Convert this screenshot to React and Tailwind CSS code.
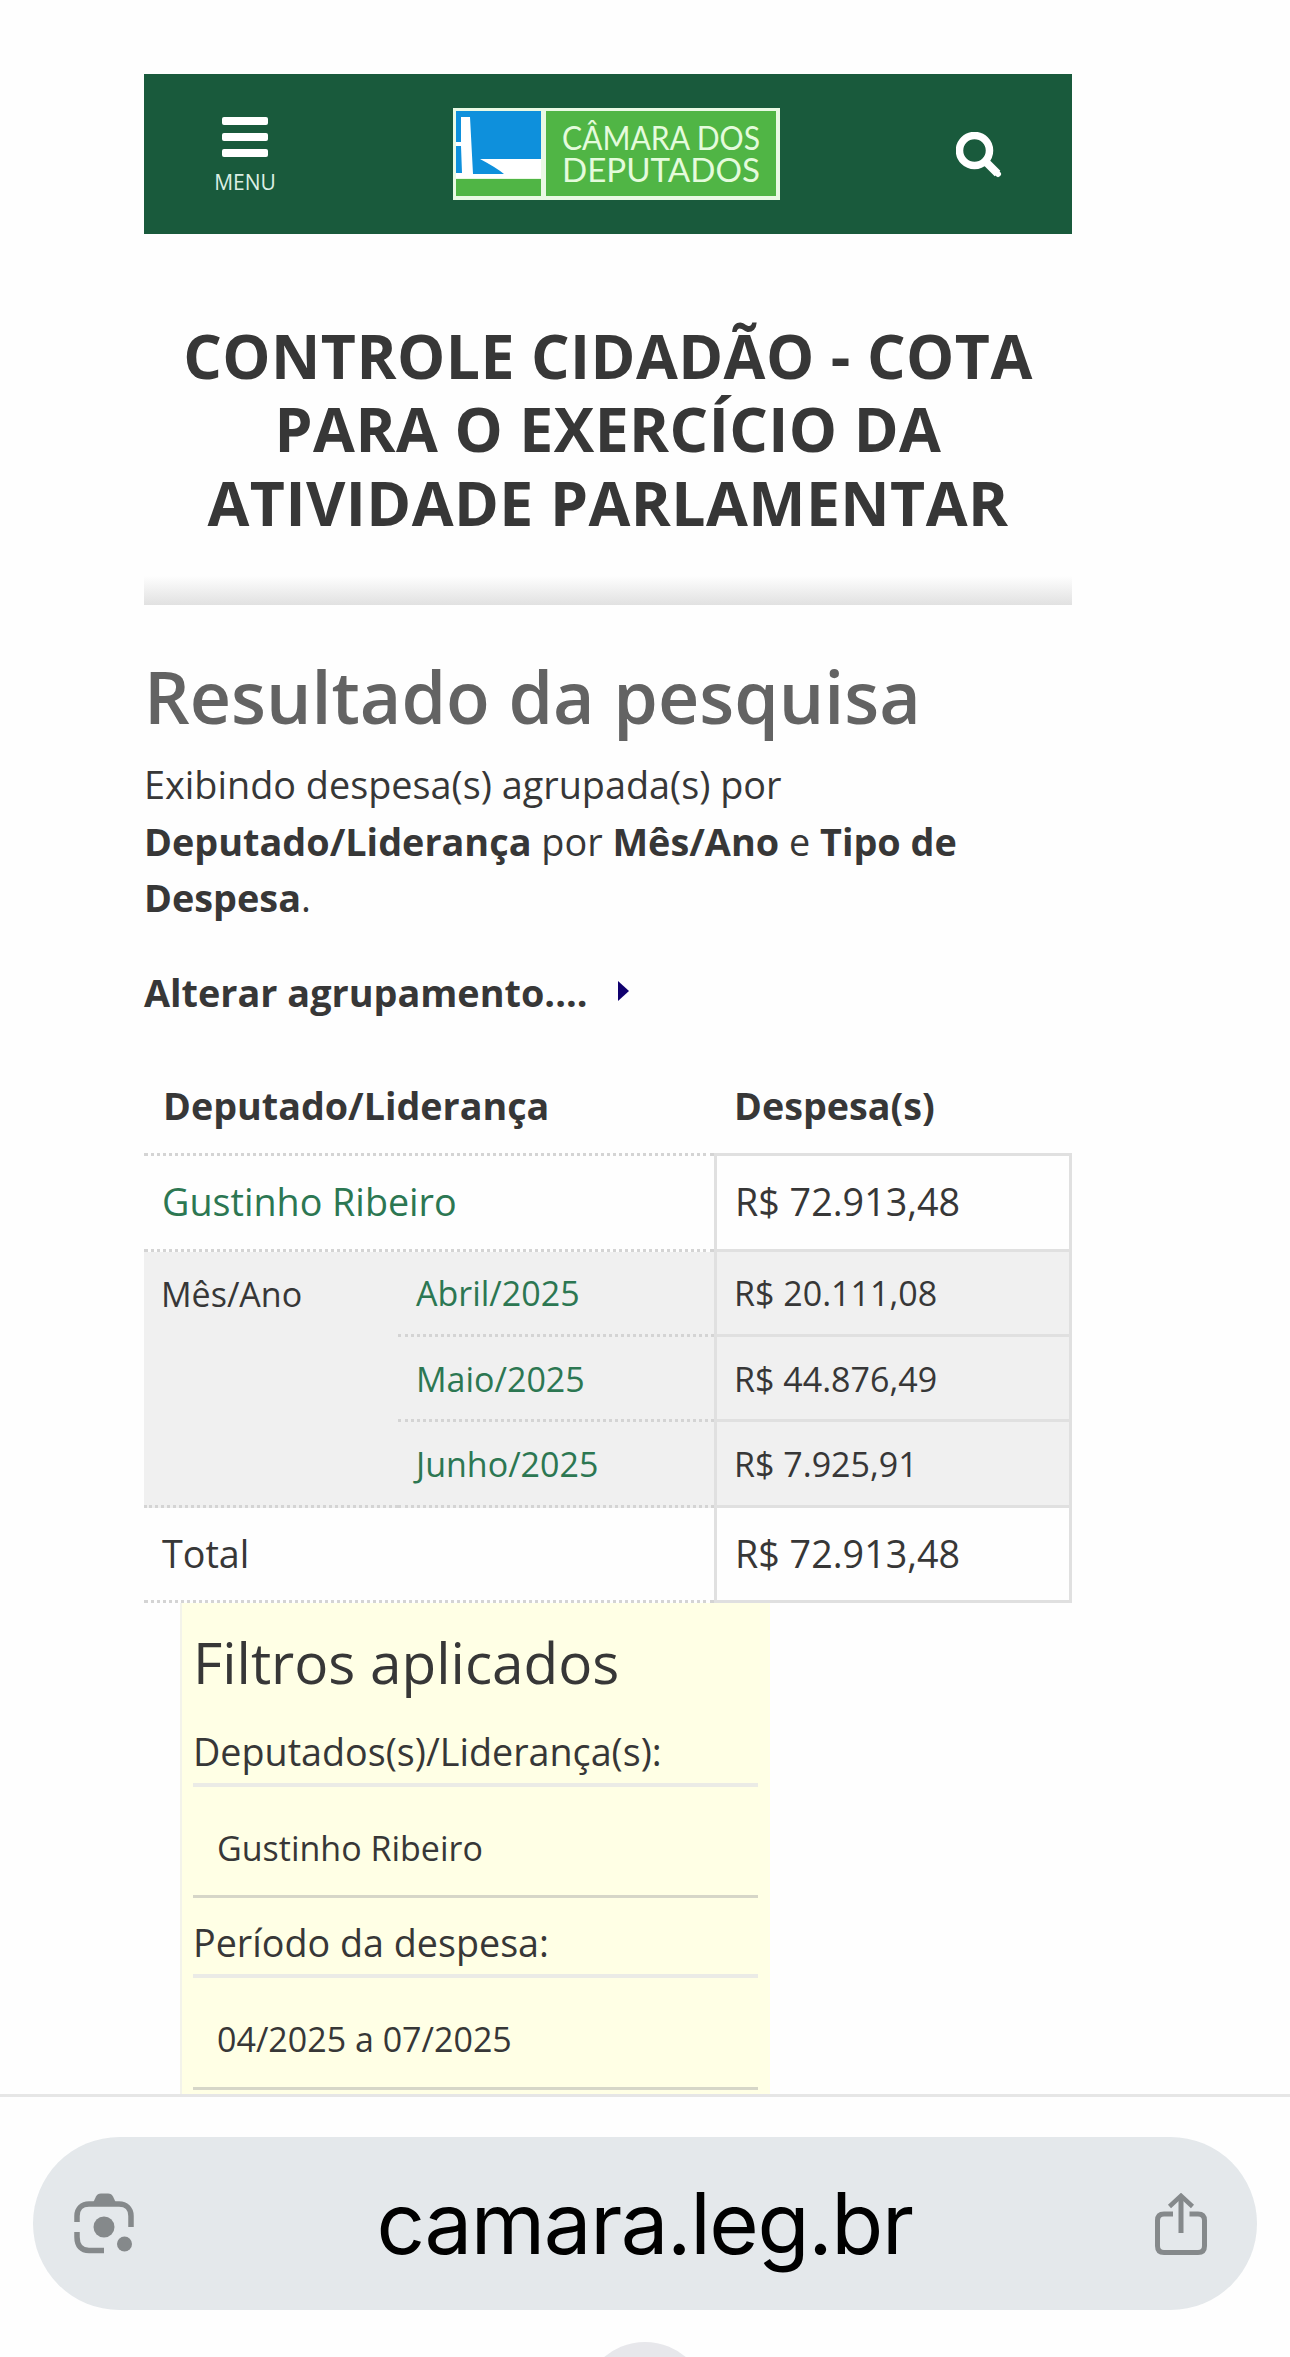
import React from 'react';

const meses = [
  { mes: 'Abril/2025', valor: 'R$ 20.111,08' },
  { mes: 'Maio/2025', valor: 'R$ 44.876,49' },
  { mes: 'Junho/2025', valor: 'R$ 7.925,91' }
];

const filtros = [
  { label: 'Deputados(s)/Liderança(s):', valor: 'Gustinho Ribeiro' },
  { label: 'Período da despesa:', valor: '04/2025 a 07/2025' }
];

const Logo = () => (
  <svg width="327" height="92" viewBox="0 0 327 92">
    <rect width="327" height="92" fill="#e9f9e4" />
    <rect x="3" y="3" width="85" height="66" fill="#0e90dc" />
    <path d="M3 34h5V9h9l3 57h31Q44 60 27 51H88v19H3v-5h6l-1-27H3z" fill="#fff" />
    <rect x="3" y="71" width="85" height="17" fill="#50b545" />
    <rect x="93" y="3" width="230" height="85" fill="#50b545" />
    <text x="109" y="42" fontSize="33" textLength="198" lengthAdjust="spacingAndGlyphs" fill="#e4fbdc" className="font-['Lato']">
      CÂMARA DOS
    </text>
    <text x="109" y="74" fontSize="33" textLength="198" lengthAdjust="spacingAndGlyphs" fill="#e4fbdc" className="font-['Lato']">
      DEPUTADOS
    </text>
  </svg>
);

const SearchIcon = () => (
  <svg width="46" height="46" viewBox="0 0 46 46" fill="none" stroke="#fff">
    <circle cx="18.500" cy="18.500" r="15" strokeWidth="7.500" />
    <path d="M30 30L41.500 41.500" strokeWidth="8" />
    <path d="M32 32L42 42" strokeWidth="6" strokeLinecap="round" />
  </svg>
);

const LensIcon = () => (
  <svg width="60" height="61" viewBox="0 0 60 61" fill="none" stroke="#85898b" strokeWidth="5.500">
    <path d="M3 29V23C3 15.500 8 11 15 11H45C52 11 57 15.500 57 23V34" />
    <path d="M3 39V44C3 53 7.500 57.500 15 57.500H30" />
    <path d="M18 12L22 3.500C23 1.500 24.500 0.500 27 0.500H34C36.500 0.500 38 1.500 39 3.500L43 12Z" fill="#85898b" stroke="none" />
    <circle cx="30" cy="34" r="10.500" fill="#85898b" stroke="none" />
    <circle cx="50.500" cy="51" r="7.500" fill="#85898b" stroke="none" />
  </svg>
);

const ShareIcon = () => (
  <svg width="52" height="62" viewBox="0 0 52 62" fill="none" stroke="#85898b" strokeWidth="5">
    <path d="M18 21H9Q2.500 21 2.500 27.500V53Q2.500 59.500 9 59.500H43Q49.500 59.500 49.500 53V27.500Q49.500 21 43 21H34.500" />
    <path d="M26 40V4" />
    <path d="M14.500 13.500L26 2.800L37.500 13.500" strokeWidth="4.500" />
  </svg>
);

const App = () => {
  return (
    <div className="w-[1290px] h-[2357px] overflow-hidden bg-[#fefefe] font-['Open_Sans',sans-serif] text-[#373737]">
      <div className="h-[2094px] pt-[74px] pl-36 overflow-hidden">
        <div className="w-[928px]">
          {/* Cabeçalho */}
          <header className="h-40 bg-[#195a3c] flex justify-between items-start pl-[70px] pr-[70px]">
            <button className="w-[62px] pt-[43px] flex flex-col items-center text-white">
              <span className="flex flex-col gap-2">
                <span className="w-[46px] h-2 rounded-[2px] bg-white" />
                <span className="w-[46px] h-2 rounded-[2px] bg-white" />
                <span className="w-[46px] h-2 rounded-[2px] bg-white" />
              </span>
              <span className="mt-[11px] text-[21px] leading-[28px] text-[#dcefe4]">MENU</span>
            </button>
            <div className="pt-[34px]">
              <Logo />
            </div>
            <button className="pt-[58px]">
              <SearchIcon />
            </button>
          </header>

          <h1 className="mt-[85px] h-[220px] text-center text-[60.700px] leading-[73.300px] tracking-[0.430px] font-bold whitespace-nowrap">
            CONTROLE CIDADÃO - COTA<br />
            PARA O EXERCÍCIO DA<br />
            ATIVIDADE PARLAMENTAR
          </h1>
          <div className="mt-[37px] h-[29px] bg-linear-to-b from-[#fefefe] to-[#e1e1e1]" />

          <h2 className="mt-[51px] text-[71.700px] leading-[80px] font-semibold text-[#636363] whitespace-nowrap">
            Resultado da pesquisa
          </h2>
          <p className="mt-[21px] text-[37.800px] leading-[56.500px] whitespace-nowrap">
            Exibindo despesa(s) agrupada(s) por<br />
            <b>Deputado/Liderança</b> por <b>Mês/Ano</b> e <b>Tipo de</b><br />
            <b>Despesa</b>.
          </p>
          <div className="mt-[38px] flex items-center text-[37.800px] leading-[56px] font-bold">
            <span>Alterar agrupamento....</span>
            <svg width="11" height="20" viewBox="0 0 11 20" className="ml-[31px] -mt-1">
              <path d="M0 0L11 10L0 20Z" fill="#10006e" />
            </svg>
          </div>

          {/* Tabela de despesas */}
          <table className="mt-[37px] w-[928px] table-fixed border-separate border-spacing-0 text-left text-[37.700px] whitespace-nowrap">
            <colgroup>
              <col className="w-[254px]" />
              <col className="w-[316px]" />
              <col className="w-[358px]" />
            </colgroup>
            <thead>
              <tr className="h-[98px]">
                <th colSpan={2} className="pl-[19px] pt-0.5 border-b-3 border-dotted border-[#d4d4d4]">Deputado/Liderança</th>
                <th className="pl-[20px] pt-0.5 border-b-3 border-[#e0e0e0]">Despesa(s)</th>
              </tr>
            </thead>
            <tbody>
              <tr className="h-24">
                <td colSpan={2} className="pl-[18px] text-[#2c7752] border-b-3 border-dotted border-[#d4d4d4]">Gustinho Ribeiro</td>
                <td className="pl-[18px] border-b-3 border-x-3 border-[#e0e0e0]">R$ 72.913,48</td>
              </tr>
              {meses.map((m, i) => (
                <tr key={m.mes} className="h-[85px] first:h-[86px] bg-[#f0f0f0] text-[34px]">
                  {i === 0 && (
                    <td rowSpan={3} className="pl-[17px] pt-[17px] align-top border-b-3 border-dotted border-[#d4d4d4]">
                      Mês/Ano
                    </td>
                  )}
                  <td className="h-[85.400px] pt-0.5 pl-[18px] text-[#2c7752] border-b-3 border-dotted border-[#d4d4d4]">{m.mes}</td>
                  <td className="h-[85.400px] pt-0.5 pl-[17px] border-b-3 border-x-3 border-[#e0e0e0]">{m.valor}</td>
                </tr>
              ))}
              <tr className="h-[95px]">
                <td colSpan={2} className="pt-px pl-[18px] border-b-3 border-dotted border-[#d4d4d4]">Total</td>
                <td className="pt-px pl-[18px] border-b-3 border-x-3 border-[#e0e0e0]">R$ 72.913,48</td>
              </tr>
            </tbody>
          </table>

          {/* Filtros */}
          <section className="ml-9 w-[590px] h-[500px] pt-[21px] pl-[11px] pr-3 bg-[#ffffe5] border-l-2 border-[#f3f3ea] whitespace-nowrap">
            <h3 className="text-[56.700px] leading-[76px] mb-[7px]">Filtros aplicados</h3>
            {filtros.map(f => (
              <div key={f.label} className="h-[191.500px] flex flex-col border-b-3 border-[#d6d6c8]">
                <div className="h-[80px] shrink-0 pt-5 text-[37.700px] leading-[50px] border-b-4 border-[#ebebe6]">
                  {f.label}
                </div>
                <div className="pl-6 pt-[36px] text-[34px] leading-[50px]">{f.valor}</div>
              </div>
            ))}
          </section>
        </div>
      </div>

      {/* Barra do navegador */}
      <footer className="h-[263px] border-t-3 border-[#e6e6e6] pt-10 px-[33px] overflow-hidden">
        <div className="h-[173px] rounded-full bg-[#e4e8eb] flex items-center justify-between pl-[41px] pr-[50px]">
          <LensIcon />
          <span className="font-['Inter',sans-serif] text-[85px] leading-none tracking-[-1.400px] text-black">camara.leg.br</span>
          <ShareIcon />
        </div>
        <div className="mt-8 mx-auto size-[126px] rounded-full bg-[#e7e7eb]" />
      </footer>
    </div>
  );
};

export default App;
